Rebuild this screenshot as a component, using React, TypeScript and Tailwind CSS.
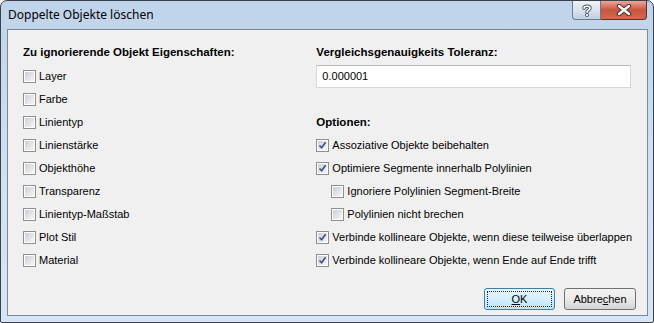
import React from "react";

const FONT = { fontFamily: '"Liberation Sans", Arial, sans-serif' };

function Check({ checked }: { checked?: boolean }) {
  return (
    <div className="w-[13px] h-[13px] border border-[#8e8f8f] bg-white p-[1px] shrink-0">
      <div className="w-full h-full bg-gradient-to-br from-[#cbcfd5] to-[#f6f6f6] relative">
        {checked && (
          <svg viewBox="0 0 9 9" className="absolute inset-0 w-full h-full">
            <path d="M1.5 4.5 L3.6 6.8 L7.6 1.2" fill="none" stroke="#3e4f8a" strokeWidth="1.6" strokeLinejoin="round" />
          </svg>
        )}
      </div>
    </div>
  );
}

function Row({ label, checked, indent }: { label: string; checked?: boolean; indent?: boolean }) {
  return (
    <div className={`h-[23px] flex items-center gap-[3px] ${indent ? "pl-[15px]" : ""}`}>
      <Check checked={checked} />
      <span className="text-[11px] text-[#000] leading-none whitespace-nowrap">{label}</span>
    </div>
  );
}

export default function App() {
  const left = ["Layer", "Farbe", "Linientyp", "Linienstärke", "Objekthöhe", "Transparenz", "Linientyp-Maßstab", "Plot Stil", "Material"];
  return (
    <div className="w-[654px] h-[323px] bg-white">
      <div className="w-[654px] h-[323px] rounded-t-[7px] rounded-b-[2px] border border-[#3d4249] bg-gradient-to-b from-[#bfd3ea] via-[#cfe0f3] to-[#d6e6f6] flex flex-col">
        <div className="h-[28px] flex items-start justify-between pl-[7px] pr-[6px]">
          <div className="pt-[8px] text-[12px] text-black leading-none" style={{ fontFamily: '"Noto Sans", sans-serif' }}>
            Doppelte Objekte löschen
          </div>
          <div className="flex">
            <div className="w-[29px] h-[19px] rounded-bl-[4px] border border-t-0 border-[#6b7a8e] bg-gradient-to-b from-[#eef2f8] via-[#dbe3ee] to-[#c3d0e1] flex items-center justify-center">
              <svg width="12" height="13" viewBox="0 0 12 13">
                <path d="M3 4.2 C3 1.5 9 1.5 9 4.2 C9 6.2 6 6.2 6 8.2" fill="none" stroke="#4d5563" strokeWidth="3.4" strokeLinecap="round" />
                <path d="M3 4.2 C3 1.5 9 1.5 9 4.2 C9 6.2 6 6.2 6 8.2" fill="none" stroke="#fff" strokeWidth="1.6" strokeLinecap="round" />
                <circle cx="6" cy="11" r="1.6" fill="#fff" stroke="#4d5563" strokeWidth="0.9" />
              </svg>
            </div>
            <div className="w-[46px] h-[19px] rounded-br-[4px] border border-t-0 border-l-0 border-[#6e2b22] bg-gradient-to-b from-[#e9a89a] via-[#c8543f] to-[#d46a4f] flex items-center justify-center">
              <svg width="16" height="12" viewBox="0 0 16 12">
                <path d="M3 2 L13 10 M13 2 L3 10" stroke="#4a2a2a" strokeWidth="4.4" strokeLinecap="round" />
                <path d="M3 2 L13 10 M13 2 L3 10" stroke="#fff" strokeWidth="2.4" strokeLinecap="round" />
              </svg>
            </div>
          </div>
        </div>
        <div className="ml-[6px] mr-[5px] h-[287px] border border-[#7d8796] bg-[#f0f0f0] flex flex-col" style={FONT}>
          <div className="flex pt-[11px]">
            <div className="w-[294px] pl-[15px] flex flex-col">
              <div className="h-[23px] flex items-center text-[11.5px] font-bold text-black">Zu ignorierende Objekt Eigenschaften:</div>
              <div className="mt-[1px] flex flex-col">
                {left.map((l) => (
                  <Row key={l} label={l} />
                ))}
              </div>
            </div>
            <div className="flex-1 pl-[16px] pr-[15px] flex flex-col">
              <div className="h-[23px] flex items-center text-[11.5px] font-bold text-black">Vergleichsgenauigkeits Toleranz:</div>
              <div className="mt-[1px] h-[23px] w-[315px] border border-[#d5d9de] border-t-[#b5bac0] bg-white flex items-center pl-[5px] text-[11px] text-black">
                0.000001
              </div>
              <div className="mt-[23px] h-[23px] flex items-center text-[11.5px] font-bold text-black">Optionen:</div>
              <div className="flex flex-col">
                <Row label="Assoziative Objekte beibehalten" checked />
                <Row label="Optimiere Segmente innerhalb Polylinien" checked />
                <Row label="Ignoriere Polylinien Segment-Breite" indent />
                <Row label="Polylinien nicht brechen" indent />
                <Row label="Verbinde kollineare Objekte, wenn diese teilweise überlappen" checked />
                <Row label="Verbinde kollineare Objekte, wenn Ende auf Ende trifft" checked />
              </div>
            </div>
          </div>
          <div className="mt-auto mb-[5px] mr-[11px] flex justify-end gap-[9px]">
            <div className="w-[71px] h-[22px] rounded-[3px] border border-[#3c7fb1] bg-gradient-to-b from-[#eaf6fd] to-[#bee6fd] p-[2px]">
              <div className="w-full h-full border border-dotted border-[#222] flex items-center justify-center text-[11px] text-black">
                <span><span className="underline">O</span>K</span>
              </div>
            </div>
            <div className="w-[72px] h-[22px] rounded-[3px] border border-[#707070] bg-gradient-to-b from-[#f2f2f2] via-[#ebebeb] to-[#d5d5d5] flex items-center justify-center text-[11px] text-black">
              <span>Abbre<span className="underline">c</span>hen</span>
            </div>
          </div>
        </div>
      </div>
    </div>
  );
}
